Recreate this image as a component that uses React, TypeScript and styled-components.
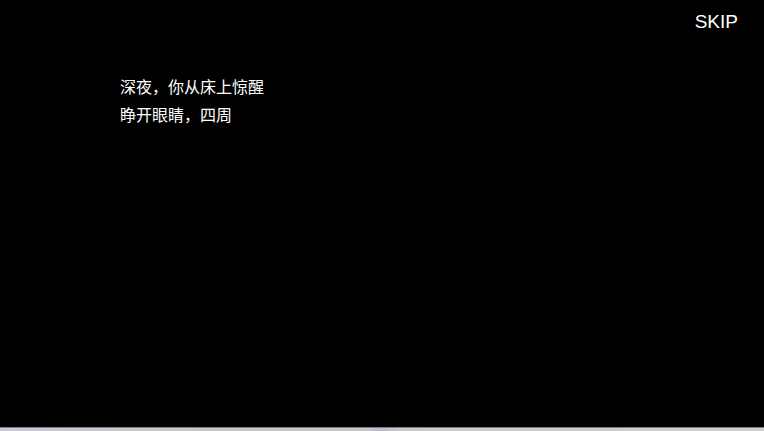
import styled, { createGlobalStyle } from 'styled-components'

const GlobalStyle = createGlobalStyle`
	html, body {
		margin: 0;
		padding: 0;
		background: #000;
	}
	#root {
		height: 100vh;
	}
`

const lines = ['深夜，你从床上惊醒', '睁开眼睛，四周']

function App() {
	return (
		<>
			<GlobalStyle />
			<Screen>
				<TopBar>
					<SkipButton>SKIP</SkipButton>
				</TopBar>
				<Story>
					{lines.map((line) => (
						<Line key={line}>{line}</Line>
					))}
				</Story>
				<BottomBar />
			</Screen>
		</>
	)
}

const Screen = styled.div`
	height: 100%;
	display: flex;
	flex-direction: column;
	background: #000;
	color: #fff;
`

const TopBar = styled.div`
	display: flex;
	justify-content: flex-end;
	padding: 11px 26px 0 0;
`

const SkipButton = styled.button`
	background: none;
	border: none;
	padding: 0;
	color: #fff;
	font-family: 'Liberation Sans', Arial, sans-serif;
	font-size: 19px;
	line-height: 22px;
	cursor: pointer;
`

const Story = styled.div`
	flex: 1;
	display: flex;
	flex-direction: column;
	gap: 4px;
	padding: 41px 0 0 120px;
`

const Line = styled.p`
	margin: 0;
	font-family: 'Noto Sans CJK SC', 'Noto Sans', sans-serif;
	font-size: 16px;
	line-height: 24px;
	color: #fff;
`

const BottomBar = styled.div`
	height: 3px;
	border-top: 1px solid #7d7f83;
	background: linear-gradient(
		90deg,
		#c7cad0 0%,
		#c5c8cc 48%,
		#b9bccc 50%,
		#c9cacc 52%,
		#cfcfcf 100%
	);
`

export default App
